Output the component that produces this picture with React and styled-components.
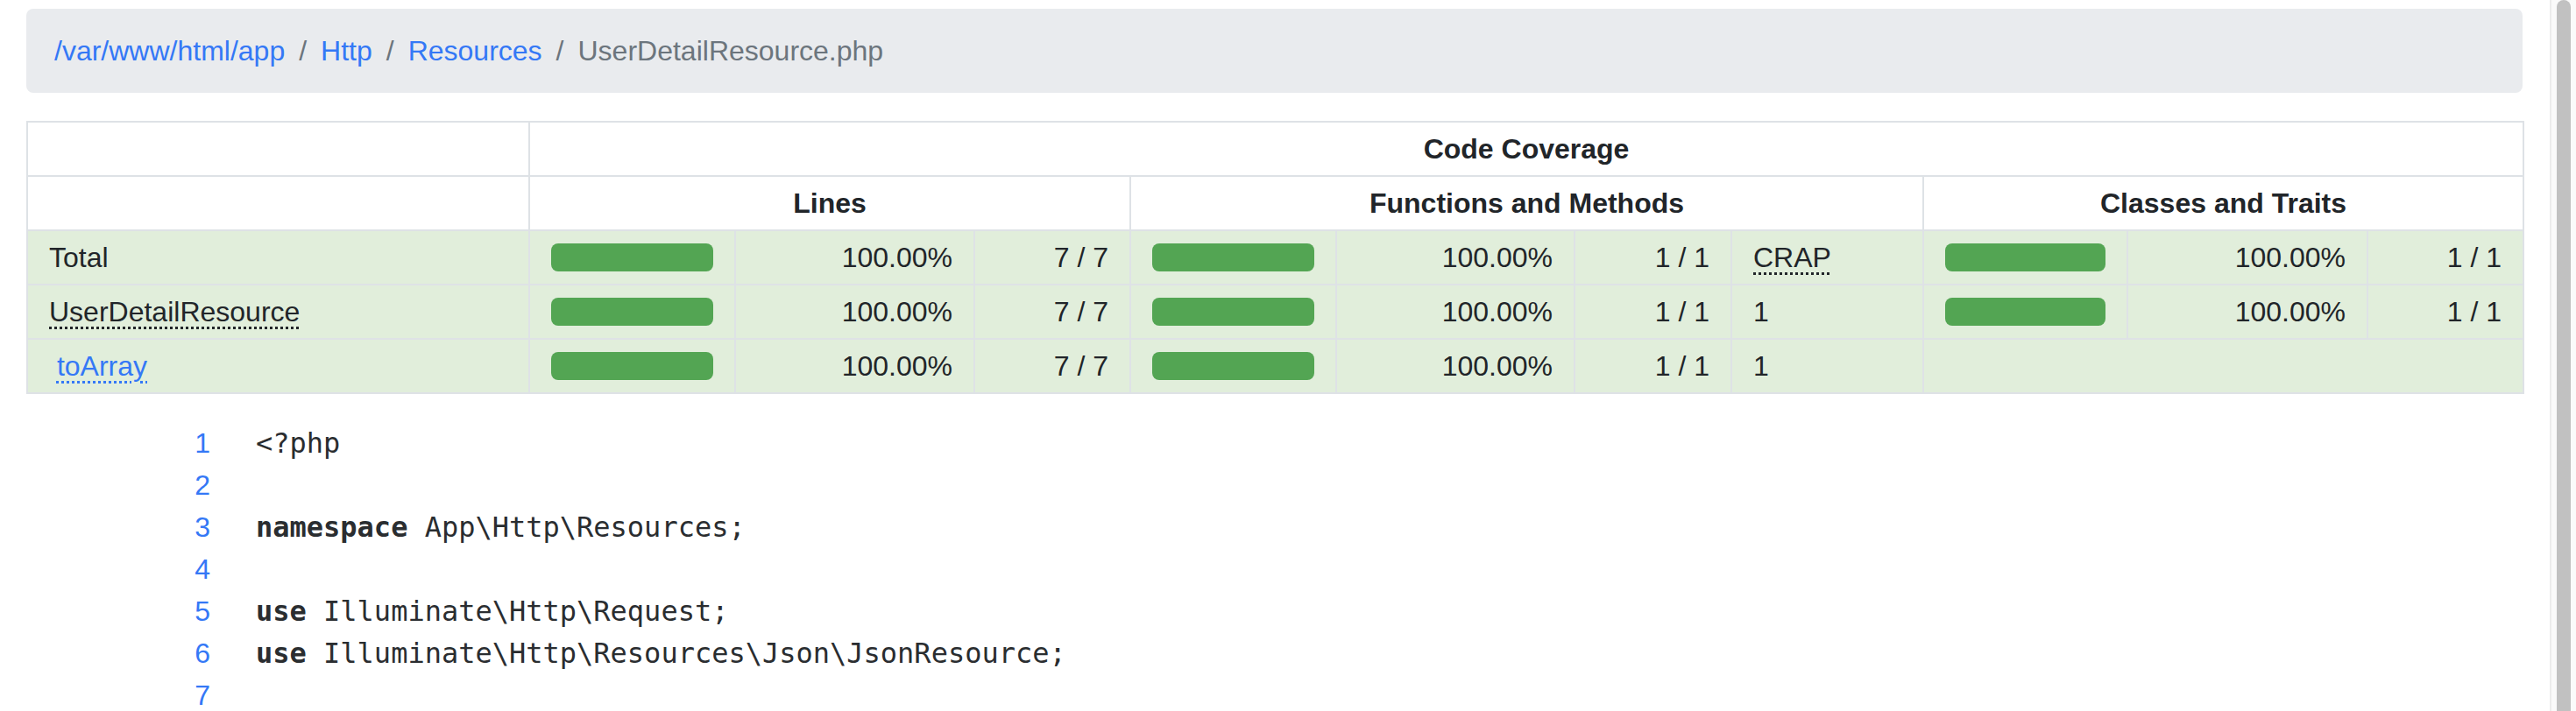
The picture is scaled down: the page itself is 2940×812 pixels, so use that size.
import styled, { createGlobalStyle } from "styled-components";

const GlobalStyle = createGlobalStyle`
  html, body {
    margin: 0;
    padding: 0;
    background: #fff;
  }
  body {
    font-family: "Liberation Sans", Arial, sans-serif;
    color: #212529;
  }
`;

const crumbs = [
  { label: "/var/www/html/app", link: true },
  { label: "Http", link: true },
  { label: "Resources", link: true },
  { label: "UserDetailResource.php", link: false },
];

// widths of the eleven table columns, measured off the report
const columns = [573, 235, 273, 178, 235, 272, 179, 219, 233, 274, 178];

const rows = [
  {
    name: "Total",
    kind: "total",
    lines: { pct: 100, label: "100.00%", count: "7 / 7" },
    funcs: { pct: 100, label: "100.00%", count: "1 / 1" },
    crap: "CRAP",
    classes: { pct: 100, label: "100.00%", count: "1 / 1" },
  },
  {
    name: "UserDetailResource",
    kind: "class",
    lines: { pct: 100, label: "100.00%", count: "7 / 7" },
    funcs: { pct: 100, label: "100.00%", count: "1 / 1" },
    crap: "1",
    classes: { pct: 100, label: "100.00%", count: "1 / 1" },
  },
  {
    name: "toArray",
    kind: "method",
    lines: { pct: 100, label: "100.00%", count: "7 / 7" },
    funcs: { pct: 100, label: "100.00%", count: "1 / 1" },
    crap: "1",
    classes: null,
  },
];

const code = [
  [{ t: "<?php" }],
  [],
  [{ t: "namespace", kw: true }, { t: " App\\Http\\Resources;" }],
  [],
  [{ t: "use", kw: true }, { t: " Illuminate\\Http\\Request;" }],
  [{ t: "use", kw: true }, { t: " Illuminate\\Http\\Resources\\Json\\JsonResource;" }],
  [],
];

const Bar = ({ pct }) => (
  <Progress>
    <ProgressFill style={{ width: `${pct}%` }} />
  </Progress>
);

const CoverageCells = ({ data }) => (
  <>
    <Cell>
      <Bar pct={data.pct} />
    </Cell>
    <Cell $align="right">{data.label}</Cell>
    <Cell $align="right">{data.count}</Cell>
  </>
);

const NameCell = ({ row }) => {
  if (row.kind === "total") return <Cell>{row.name}</Cell>;
  if (row.kind === "class")
    return (
      <Cell>
        <Abbr title="App\Http\Resources\UserDetailResource">{row.name}</Abbr>
      </Cell>
    );
  return (
    <Cell>
      &nbsp;
      <NameLink href="#13">
        <Abbr title="toArray(Request $request): array">{row.name}</Abbr>
      </NameLink>
    </Cell>
  );
};

const App = () => {
  return (
    <Page>
      <GlobalStyle />
      <Main>
        <Breadcrumb>
          {crumbs.map((c) => (
            <Crumb key={c.label}>
              {c.link ? <CrumbLink href="#">{c.label}</CrumbLink> : <Current>{c.label}</Current>}
            </Crumb>
          ))}
        </Breadcrumb>

        <CoverageTable>
          <colgroup>
            {columns.map((w, i) => (
              <Col key={i} $w={w} />
            ))}
          </colgroup>
          <thead>
            <tr>
              <HeadCell />
              <HeadCell colSpan={10}>Code Coverage</HeadCell>
            </tr>
            <tr>
              <HeadCell />
              <HeadCell colSpan={3}>Lines</HeadCell>
              <HeadCell colSpan={4}>Functions and Methods</HeadCell>
              <HeadCell colSpan={3}>Classes and Traits</HeadCell>
            </tr>
          </thead>
          <tbody>
            {rows.map((row) => (
              <SuccessRow key={row.name}>
                <NameCell row={row} />
                <CoverageCells data={row.lines} />
                <CoverageCells data={row.funcs} />
                <Cell>
                  {row.crap === "CRAP" ? (
                    <Abbr title="Change Risk Anti-Patterns (CRAP) Index">CRAP</Abbr>
                  ) : (
                    row.crap
                  )}
                </Cell>
                {row.classes ? <CoverageCells data={row.classes} /> : <Cell colSpan={3} />}
              </SuccessRow>
            ))}
          </tbody>
        </CoverageTable>

        <CodeList>
          {code.map((parts, i) => (
            <CodeRow key={i}>
              <LineNo href={`#${i + 1}`}>{i + 1}</LineNo>
              <CodeText>
                {parts.map((p, j) => (p.kw ? <Keyword key={j}>{p.t}</Keyword> : <span key={j}>{p.t}</span>))}
              </CodeText>
            </CodeRow>
          ))}
        </CodeList>
      </Main>

      <Scrollbar>
        <ScrollThumb />
      </Scrollbar>
    </Page>
  );
};

const Page = styled.div`
  display: flex;
  flex-direction: row;
  height: 812px;
  overflow: hidden;
`;

const Main = styled.div`
  flex: 1;
  min-width: 0;
  padding: 10px 31px 0 30px;
`;

const Breadcrumb = styled.ol`
  display: flex;
  flex-wrap: wrap;
  list-style: none;
  margin: 0 0 32px;
  padding: 24px 32px;
  background: #e9ebee;
  border-radius: 8px;
  font-size: 32px;
  line-height: 48px;
`;

const Crumb = styled.li`
  display: flex;

  & + &::before {
    content: "/";
    padding: 0 16px;
    color: #6c757d;
  }
`;

const CrumbLink = styled.a`
  color: #3478f6;
  text-decoration: none;
`;

const Current = styled.span`
  color: #6c757d;
`;

const CoverageTable = styled.table`
  width: 100%;
  table-layout: fixed;
  border-collapse: collapse;
  border: 2px solid #dee2e6;
  margin-bottom: 32px;
  font-size: 32px;
  line-height: 48px;
`;

const Col = styled.col`
  width: ${(p) => p.$w}px;
`;

const HeadCell = styled.th`
  border: 2px solid #dee2e6;
  padding: 6px 24px;
  text-align: center;
  font-weight: bold;
  background: #fff;
  color: #212529;
`;

const SuccessRow = styled.tr`
  background: #e1eedb;
`;

const Cell = styled.td`
  border: 2px solid #dee2e6;
  padding: 6px 24px;
  text-align: ${(p) => p.$align || "left"};
  vertical-align: middle;
  white-space: nowrap;
  color: #212529;
`;

const Progress = styled.div`
  height: 32px;
  border-radius: 8px;
  overflow: hidden;
  background: #e9ecef;
  display: flex;
`;

const ProgressFill = styled.div`
  background: #53a553;
  height: 100%;
`;

const Abbr = styled.abbr`
  text-decoration: underline dotted;
  text-decoration-thickness: 3px;
  text-underline-offset: 6px;
  cursor: help;
`;

const NameLink = styled.a`
  color: #3478f6;
  text-decoration: none;
`;

const CodeList = styled.div`
  display: flex;
  flex-direction: column;
`;

const CodeRow = styled.div`
  display: grid;
  grid-template-columns: 236px 1fr;
  height: 48px;
  line-height: 48px;
`;

const LineNo = styled.a`
  text-align: right;
  padding-right: 26px;
  font-size: 32px;
  color: #3478f6;
  text-decoration: none;
`;

const CodeText = styled.span`
  padding-left: 26px;
  font-family: "DejaVu Sans Mono", "Liberation Mono", monospace;
  font-size: 32px;
  white-space: pre;
  color: #2a2d30;
`;

const Keyword = styled.b`
  font-weight: bold;
`;

const Scrollbar = styled.div`
  width: 30px;
  box-sizing: border-box;
  flex-shrink: 0;
  display: flex;
  padding: 0 6px;
  background: #fafafa;
  border-left: 2px solid #ececec;
`;

const ScrollThumb = styled.div`
  flex: 1;
  background: #c1c1c1;
  border-radius: 8px 8px 0 0;
`;

export default App;
